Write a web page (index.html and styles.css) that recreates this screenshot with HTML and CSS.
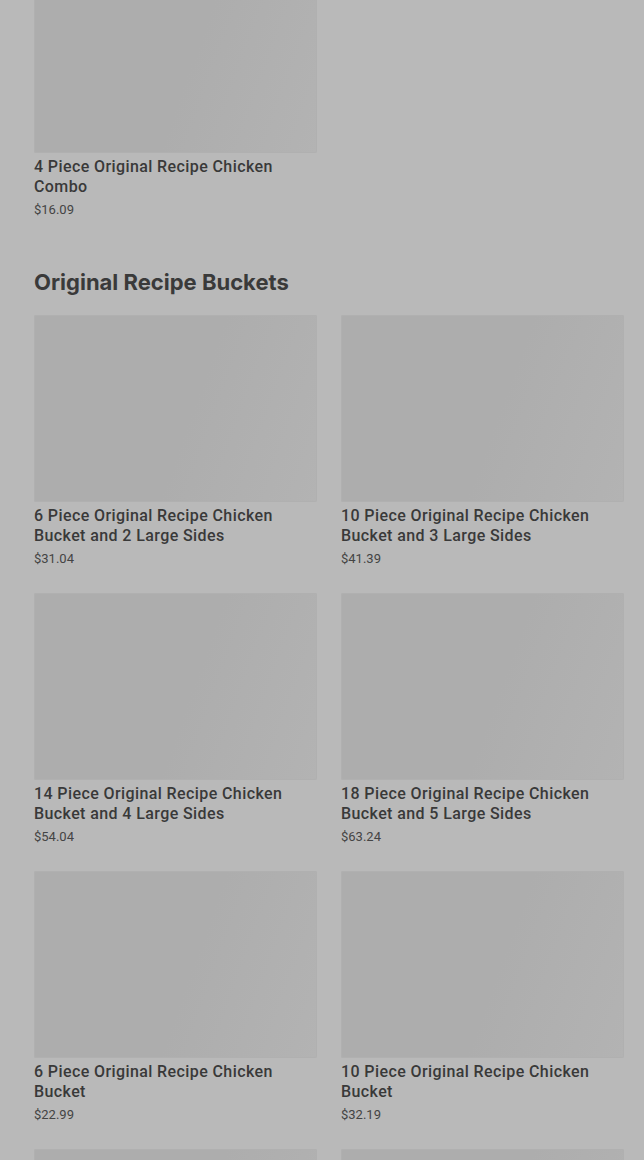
FILE: index.html
```html
<!DOCTYPE html>
<html lang="en">
<head>
    <meta charset="UTF-8">
    <meta name="viewport" content="width=device-width, initial-scale=1.0">
    <title>Menu</title>
    <link rel="stylesheet" href="styles.css">
</head>
<body>
    <div class="page">
        <!-- Previous section (scrolled) -->
        <section class="section">
            <div class="grid">
                <div class="item">
                    <div class="photo"></div>
                    <div class="name">4 Piece Original Recipe Chicken Combo</div>
                    <div class="price">$16.09</div>
                </div>
            </div>
        </section>

        <section class="section">
            <h2 class="heading">Original Recipe Buckets</h2>
            <div class="grid">
                <div class="item">
                    <div class="photo"></div>
                    <div class="name">6 Piece Original Recipe Chicken Bucket and 2 Large Sides</div>
                    <div class="price">$31.04</div>
                </div>
                <div class="item">
                    <div class="photo"></div>
                    <div class="name">10 Piece Original Recipe Chicken Bucket and 3 Large Sides</div>
                    <div class="price">$41.39</div>
                </div>
                <div class="item">
                    <div class="photo"></div>
                    <div class="name">14 Piece Original Recipe Chicken Bucket and 4 Large Sides</div>
                    <div class="price">$54.04</div>
                </div>
                <div class="item">
                    <div class="photo"></div>
                    <div class="name">18 Piece Original Recipe Chicken Bucket and 5 Large Sides</div>
                    <div class="price">$63.24</div>
                </div>
                <div class="item">
                    <div class="photo"></div>
                    <div class="name">6 Piece Original Recipe Chicken Bucket</div>
                    <div class="price">$22.99</div>
                </div>
                <div class="item">
                    <div class="photo"></div>
                    <div class="name">10 Piece Original Recipe Chicken Bucket</div>
                    <div class="price">$32.19</div>
                </div>
                <div class="item">
                    <div class="photo"></div>
                </div>
                <div class="item">
                    <div class="photo"></div>
                </div>
            </div>
        </section>
    </div>
</body>
</html>
```

FILE: styles.css
```css
body {
    margin: 0;
    background: #b9b9b9;
    font-family: Roboto, "Liberation Sans", sans-serif;
    color: #393939;
    overflow: hidden;
}

.page {
    margin-top: -34px;
    padding: 0 20px 0 34px;
}

.section + .section {
    margin-top: 49px;
}

.heading {
    font-family: Inter, "Liberation Sans", sans-serif;
    font-size: 22px;
    font-weight: 700;
    letter-spacing: 0;
    line-height: 28px;
    margin: 0 0 19px;
    color: #3a3a3a;
}

.grid {
    display: grid;
    grid-template-columns: 283px 283px;
    column-gap: 24px;
    row-gap: 25px;
}

.photo {
    height: 187px;
    border-radius: 2px;
    background: linear-gradient(110deg, #adadad 0%, #adadad 55%, #b3b3b3 100%);
    box-shadow: inset 0 0 0 1px #b0b0b0;
}

.name {
    margin-top: 4px;
    font-size: 16px;
    font-weight: 500;
    letter-spacing: 0.4px;
    line-height: 20px;
    padding-right: 6px;
}

.price {
    margin-top: 4px;
    font-size: 13px;
    line-height: 18px;
    color: #444;
}
```
